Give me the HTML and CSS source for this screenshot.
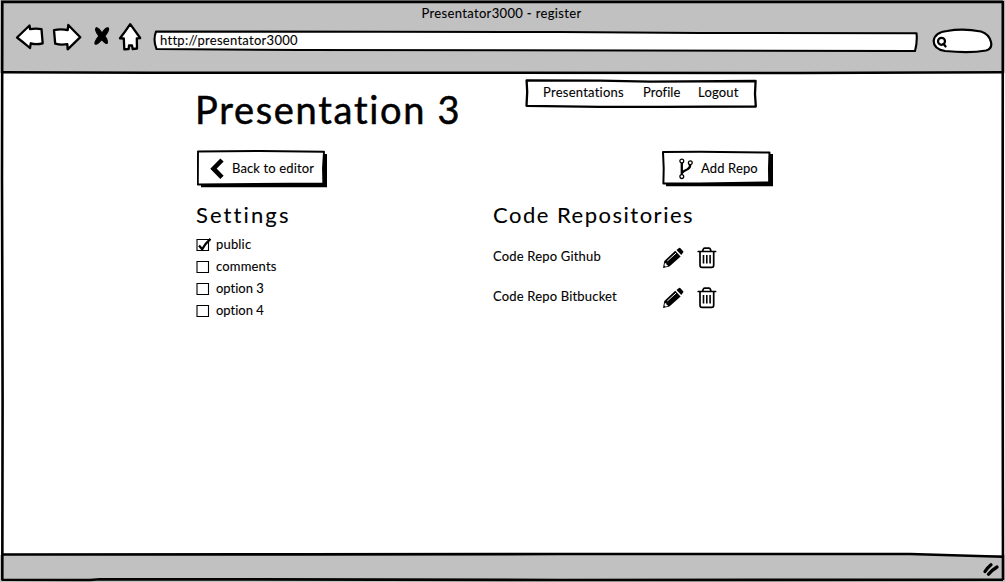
FILE: index.html
```html
<!DOCTYPE html>
<html lang="en">
<head>
<meta charset="utf-8">
<title>Presentator3000 - register</title>
<link rel="stylesheet" href="styles.css">
</head>
<body>
<svg class="defs" width="0" height="0">
  <symbol id="pencil" viewBox="0 0 22 22">
    <path d="M1 21 2.3 14 13.2 3.8 18.6 9.4 7.4 19.6Z" fill="#000"/>
    <path d="M14.5 3 17 .9Q17.6.5 18.2 1L21.2 4.3Q21.7 5 21.1 5.6L19.3 7.9Z" fill="#000"/>
    <path d="M5.3 14 14 6.1" stroke="#fff" stroke-width="1"/>
    <path d="M2.8 16.3 4.2 16.2 4.6 17.7 5.9 18.3 5.4 19.2 3.3 19.5 2.4 18.5Z" fill="#fff"/>
  </symbol>
  <symbol id="trash" viewBox="0 0 20 22">
    <g fill="none" stroke="#000" stroke-width="1.7" stroke-linecap="round" stroke-linejoin="round">
      <path d="M1.2 4.5H18.6M3 4.5V18.2Q3 20.3 5 20.3H14.7Q16.7 20.3 16.7 18.2V4.5M5.6 4.3 6.2 2.2Q6.6 1.1 7.6 1.1H12Q13 1.1 13.4 2.2L14 4.3"/>
      <path d="M6.5 8V16.4M9.8 8V16.4M13.1 8V16.4" stroke-width="1.6" stroke-linecap="butt"/>
    </g>
  </symbol>
</svg>
<div class="window">
  <header class="chrome">
    <div class="window-title"><span>Presentator3000 - register</span></div>
    <div class="toolbar">
      <svg class="tool-icons" width="128" height="32" viewBox="15 21 128 32" fill="#fff" stroke="#000" stroke-width="2.3" stroke-linejoin="round" stroke-linecap="round">
        <path d="M17 37.5 29.5 25.5 30 29.2Q36 28 41.5 29.2L42.7 43.3Q36 45 30.8 43.3L30 48Q23 42 17 37.5Z"/>
        <path d="M54 30.2Q60 28.8 67.7 30L68.3 25Q74 31 80.3 37.2L67.7 49.3 67.3 44.2Q61 45.3 55.2 43.7Z"/>
        <path d="M96.3 27.7Q99 28.5 102 33Q106 27 108.4 28Q109.7 30 104.8 36Q108 40 107.2 43.3Q105 44 101.8 39.5Q97 45.5 95 43.8Q94.2 42 98.8 36Q94 29.5 96.3 27.7Z" fill="#000" stroke-width="1.2"/>
        <path d="M130.2 24.2 140.2 38 136.8 38.3 137 48.5 132.7 49 132 45.5 129 45.3 128.7 49 124.3 49.3 123.8 38.5 120 38.3Q125 32 130.2 24.2Z"/>
      </svg>
      <div class="address">
        <svg class="outline" width="766" height="23" viewBox="153 29 766 23" fill="#fff" stroke="#000" stroke-width="2.1" stroke-linejoin="round"><path d="M156 31.5 380 31.8 560 32 700 33 916.5 33.2Q917.5 42 915 51L640 50.5 300 50 156.5 49Q152.8 40 156 31.5Z"/></svg>
        <span>http://presentator3000</span>
      </div>
      <svg class="search" width="61" height="28" viewBox="932 27 61 28" fill="none" stroke="#000" stroke-width="2.2" stroke-linecap="round">
        <path fill="#fff" d="M945 51Q933.5 49 933.7 41 934.5 32.5 947 31 963 28 981 31.5 989 34 991 42 992.5 49 986 50.5 970 53.5 945 51Z"/>
        <circle cx="941.5" cy="41.3" r="3.5" stroke-width="2.2"/><path d="M943.5 43.8 945.6 46.5" stroke-width="2.2"/>
      </svg>
    </div>
  </header>

  <main class="page">
    <div class="top-row">
      <h1><span>Presentation 3</span></h1>
      <nav class="menu">
        <svg class="outline" width="232" height="30" viewBox="525 79 232 30" fill="#fff" stroke="#000" stroke-width="2.3" stroke-linejoin="round"><path d="M526.6 80.5 600 80.6 650 81.6 755.6 81 755 94 755.8 106.5 660 106.8 600 106.8 526.5 105.8 527.2 92Z"/></svg>
        <a class="m1">Presentations</a><a class="m2">Profile</a><a class="m3">Logout</a>
      </nav>
    </div>

    <div class="actions">
      <div class="button back">
        <svg class="outline" width="131" height="38" viewBox="197 150 131 38"><path d="M201 154H327V187.3H201Z"/><path d="M198 151.5 260 151 324 151.8 323 168 323.3 183.5 197.8 184.5Z" fill="#fff" stroke="#000" stroke-width="1.9" stroke-linejoin="round"/></svg>
        <svg class="chevron" width="16" height="22" viewBox="0 0 16 22"><path d="M13 2 4.5 10.7 13 19.4" fill="none" stroke="#000" stroke-width="4.6"/></svg>
        <span>Back to editor</span>
      </div>
      <div class="button add">
        <svg class="outline" width="112" height="38" viewBox="662 150 112 38"><path d="M666 154H773V186.3H666Z"/><path d="M663 152 700 151.8 769.5 152.5 769 168 769.2 182.4 700 183.6 663.4 183.6 663.7 168Z" fill="#fff" stroke="#000" stroke-width="2" stroke-linejoin="round"/></svg>
        <svg class="branch" width="16" height="22" viewBox="0 0 16 22" fill="none" stroke="#000"><path d="M3.8 4.5V16.5M12.2 6.5Q12.2 10.2 9 11.5 5.5 12.8 3.8 15" stroke-width="2.3"/><g fill="#fff" stroke-width="1.3"><circle cx="3.8" cy="3" r="1.9"/><circle cx="12.3" cy="4.7" r="1.9"/><circle cx="3.8" cy="18.6" r="1.9"/></g></svg>
        <span>Add Repo</span>
      </div>
    </div>

    <div class="columns">
      <section class="settings">
        <h2 class="h-settings"><span>Settings</span></h2>
        <ul>
          <li><svg width="16" height="16" viewBox="0 0 16 16" fill="none" stroke="#000"><path d="M1 2.5H12.5V13.5H1Z" stroke-width="1.1"/><path d="M3 8.6 6.2 12.2Q9 6.6 14.5 1.8" stroke-width="2.3"/></svg><span>public</span></li>
          <li><svg width="16" height="16" viewBox="0 0 16 16" fill="none" stroke="#000"><path d="M1 2.5H12.5V13.5H1Z" stroke-width="1.1"/></svg><span>comments</span></li>
          <li><svg width="16" height="16" viewBox="0 0 16 16" fill="none" stroke="#000"><path d="M1 2.5H12.5V13.5H1Z" stroke-width="1.1"/></svg><span class="option">option 3</span></li>
          <li><svg width="16" height="16" viewBox="0 0 16 16" fill="none" stroke="#000"><path d="M1 2.5H12.5V13.5H1Z" stroke-width="1.1"/></svg><span class="option">option 4</span></li>
        </ul>
      </section>
      <section class="repos">
        <h2 class="h-repos"><span>Code Repositories</span></h2>
        <div class="repo"><span>Code Repo Github</span><svg class="icon-pencil"><use href="#pencil"/></svg><svg class="icon-trash"><use href="#trash"/></svg></div>
        <div class="repo"><span>Code Repo Bitbucket</span><svg class="icon-pencil"><use href="#pencil"/></svg><svg class="icon-trash"><use href="#trash"/></svg></div>
      </section>
    </div>
  </main>

  <footer class="status">
    <svg width="18" height="16" viewBox="982 561 18 16" fill="none" stroke="#000" stroke-width="3.3" stroke-linecap="round"><path d="M985 571.5Q987 568 991 564.7M988.5 574.3Q992 570 997 567"/></svg>
  </footer>

  <svg class="frame" width="1005" height="582" viewBox="0 0 1005 582" fill="none" stroke="#000" stroke-width="2.6">
    <path d="M1 1.9H1003M2.3 1 2 180 2.6 400 2.3 580M1.5 579.8 90 580 100 579.2 250 579.4 560 580 1003 579.8M1002.8 1 1002.6 300 1003 580"/>
    <path d="M2 72.3 150 72.7 500 72.8 800 73 1003 72.2M2 554.5 300 554.4 560 554 910 554 1003 556.8"/>
  </svg>
</div>
</body>
</html>
```
FILE: styles.css
```css
* { box-sizing: border-box; }
body {
  margin: 0;
  font: 13px/16px Lato, "Open Sans", sans-serif;
  letter-spacing: .18px;
  font-variant-ligatures: none;
  -webkit-text-stroke: .1px #000;
  color: #000;
  background: #fff;
  overflow: hidden;
}
span, a { white-space: nowrap; }
.defs { position: absolute; }
.window {
  position: relative;
  display: flex;
  flex-direction: column;
  width: 1005px;
  height: 582px;
}
.frame { position: absolute; inset: 0; }
.outline { position: absolute; left: 0; top: 0; z-index: -1; }

.chrome { height: 73px; background: #c1c1c1; position: relative; z-index: 0; }
.window-title { height: 21px; padding: 5px 2px 0 0; text-align: center; letter-spacing: .34px; }
.toolbar { display: flex; padding-left: 15px; }
.address {
  position: relative;
  width: 766px;
  height: 23px;
  margin: 8px 13px 0 10px;
  padding: 3px 0 0 7px;
  letter-spacing: .28px;
}
.search { margin-top: 6px; }

.page { flex: 1; padding-left: 196px; position: relative; z-index: 0; }
.top-row { display: flex; height: 77px; padding-top: 6px; }
h1 {
  width: 330px;
  margin: 9px 0 0 -1px;
  font-size: 38px;
  line-height: 43px;
  font-weight: 400;
  letter-spacing: 1.7px;
  -webkit-text-stroke: .5px #000;
}
.menu { position: relative; display: flex; width: 232px; height: 30px; padding: 5px 0 0 18px; }
.m1 { width: 100px; letter-spacing: .25px; }
.m2 { width: 55px; letter-spacing: .05px; }

.actions { display: flex; justify-content: space-between; width: 578px; height: 52px; padding-left: 1px; }
.button { position: relative; display: flex; height: 38px; padding-top: 8px; }
.button span { padding-top: 2px; letter-spacing: .13px; }
.back { width: 131px; padding-left: 12px; }
.back span { padding-left: 7px; }
.add { width: 112px; padding-left: 16px; }
.add span { padding-left: 7px; }

.columns { display: grid; grid-template-columns: 297px 230px; }
h2 { margin: 0; font-size: 22px; line-height: 26px; font-weight: 400; }
.h-settings { letter-spacing: 2.1px; }
.h-repos { letter-spacing: 1.5px; }
ul { list-style: none; margin: 6px 0 0; padding: 0; }
li { display: flex; height: 22px; gap: 4px; padding-top: 2px; }
li svg { margin-top: 1px; }
.option { letter-spacing: 0; }
.repo { display: grid; grid-template-columns: 168.5px 35.5px 20px; height: 40px; padding-top: 18px; }
.repo span { padding-top: 2px; }
.icon-pencil { width: 22px; height: 22px; margin-top: .8px; }
.icon-trash { width: 20px; height: 22px; margin-top: .8px; }

.status {
  display: flex;
  justify-content: flex-end;
  height: 27px;
  padding: 6px 5px 0 0;
  background: #c1c1c1;
}
```
